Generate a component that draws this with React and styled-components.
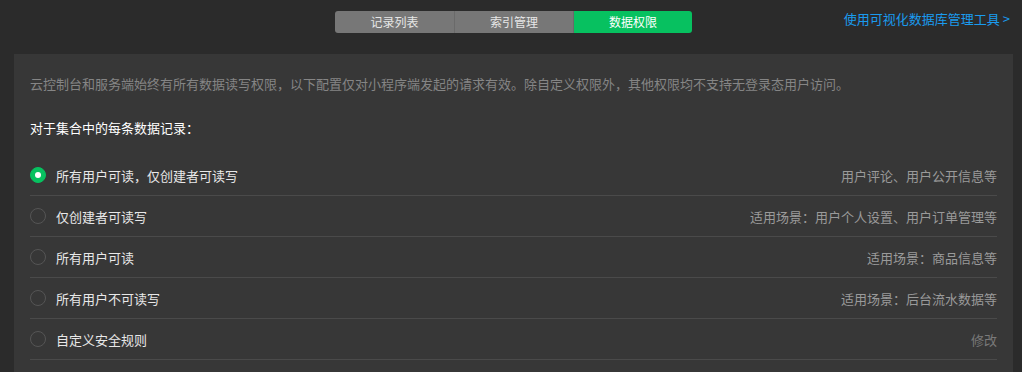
import React, { useState } from "react";
import styled, { createGlobalStyle } from "styled-components";

const GlobalStyle = createGlobalStyle`
  html, body {
    margin: 0;
    padding: 0;
    background: #2b2b2b;
    font-family: "Noto Sans CJK SC", "Noto Sans", sans-serif;
  }
`;

const Page = styled.div`
  width: 1022px;
  height: 372px;
  overflow: hidden;
  background: #2b2b2b;
  padding: 0 9px 0 14px;
  box-sizing: border-box;
`;

const TopBar = styled.div`
  height: 54px;
  display: grid;
  grid-template-columns: 1fr auto 1fr;
  align-items: start;
`;

const Tabs = styled.div`
  grid-column: 2;
  margin-top: 11px;
  display: flex;
  border-radius: 3px;
  overflow: hidden;
`;

const Tab = styled.div`
  width: 119px;
  height: 22px;
  line-height: 22px;
  text-align: center;
  font-size: 12px;
  color: ${(p) => (p.$active ? "#ffffff" : "#e6e6e6")};
  background: ${(p) => (p.$active ? "#07c160" : "#777777")};
  border-left: ${(p) => (p.$first ? "none" : "1px solid #6a6a6a")};
  box-sizing: border-box;
`;

const ToolLink = styled.a`
  grid-column: 3;
  justify-self: end;
  margin-top: 9px;
  margin-right: 3px;
  font-size: 13px;
  line-height: 20px;
  color: #1a9bef;
  text-decoration: none;
`;

const Panel = styled.div`
  background: #373737;
  padding: 20px 16px 0;
  min-height: 320px;
`;

const Desc = styled.p`
  margin: 0;
  font-size: 13px;
  line-height: 20px;
  color: #858585;
`;

const Heading = styled.h4`
  margin: 24px 0 17px;
  font-size: 13px;
  font-weight: normal;
  line-height: 20px;
  color: #ffffff;
`;

const Row = styled.label`
  display: flex;
  align-items: center;
  height: 40px;
  border-bottom: 1px solid #4a4a4a;
  cursor: pointer;
`;

const Radio = styled.span`
  width: 16px;
  height: 16px;
  border-radius: 50%;
  box-sizing: border-box;
  border: 1px solid ${(p) => (p.$checked ? "#07c160" : "#555555")};
  background: ${(p) => (p.$checked ? "#07c160" : "transparent")};
  display: flex;
  align-items: center;
  justify-content: center;
  margin-right: 10px;
  &::after {
    content: "";
    width: 6px;
    height: 6px;
    border-radius: 50%;
    background: #ffffff;
    display: ${(p) => (p.$checked ? "block" : "none")};
  }
`;

const Label = styled.span`
  flex: 1;
  font-size: 13px;
  color: #e8e8e8;
`;

const Hint = styled.span`
  font-size: 13px;
  color: ${(p) => (p.$muted ? "#7a7a7a" : "#9a9a9a")};
`;

const options = [
  { label: "所有用户可读，仅创建者可读写", hint: "用户评论、用户公开信息等" },
  { label: "仅创建者可读写", hint: "适用场景：用户个人设置、用户订单管理等" },
  { label: "所有用户可读", hint: "适用场景：商品信息等" },
  { label: "所有用户不可读写", hint: "适用场景：后台流水数据等" },
  { label: "自定义安全规则", hint: "修改", muted: true },
];

export default function App() {
  const [selected, setSelected] = useState(0);
  return (
    <Page>
      <GlobalStyle />
      <TopBar>
        <Tabs>
          <Tab $first>记录列表</Tab>
          <Tab>索引管理</Tab>
          <Tab $active>数据权限</Tab>
        </Tabs>
        <ToolLink href="#">使用可视化数据库管理工具 &gt;</ToolLink>
      </TopBar>
      <Panel>
        <Desc>
          云控制台和服务端始终有所有数据读写权限，以下配置仅对小程序端发起的请求有效。除自定义权限外，其他权限均不支持无登录态用户访问。
        </Desc>
        <Heading>对于集合中的每条数据记录：</Heading>
        {options.map((o, i) => (
          <Row key={o.label} onClick={() => setSelected(i)}>
            <Radio $checked={selected === i} />
            <Label>{o.label}</Label>
            <Hint $muted={o.muted}>{o.hint}</Hint>
          </Row>
        ))}
      </Panel>
    </Page>
  );
}
